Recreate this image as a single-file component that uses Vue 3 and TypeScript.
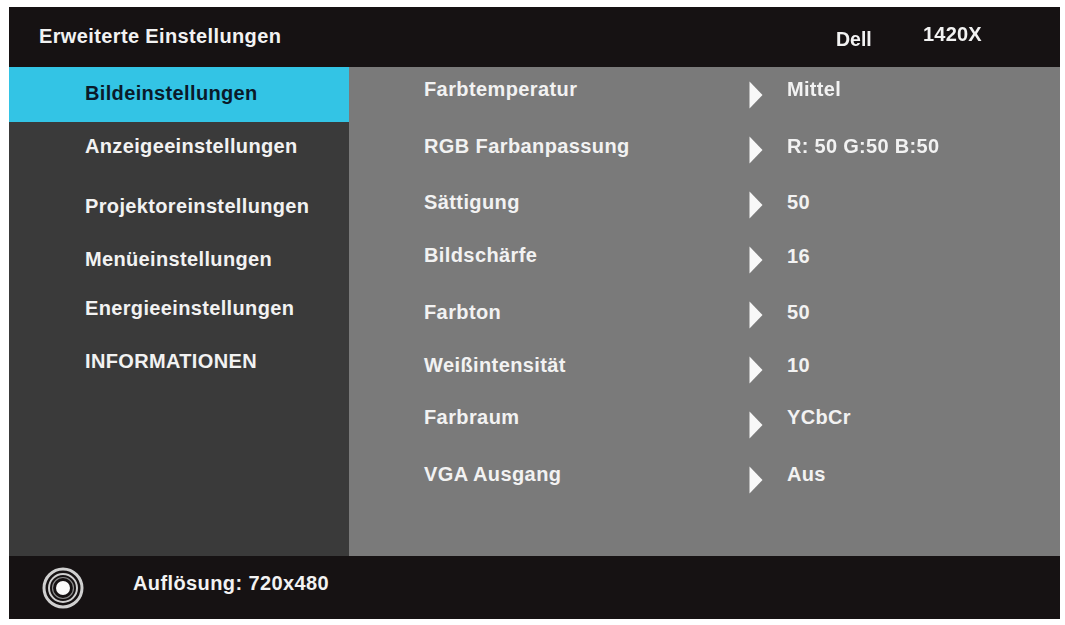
<script setup lang="ts">
interface MenuItem { label: string; shift: number }
interface SettingRow { label: string; value: string; labelShift: number; valueShift: number }

const menu: MenuItem[] = [
  { label: 'Bildeinstellungen', shift: -1 },
  { label: 'Anzeigeeinstellungen', shift: -3 },
  { label: 'Projektoreinstellungen', shift: 2 },
  { label: 'Menüeinstellungen', shift: 0 },
  { label: 'Energieeinstellungen', shift: -6 },
  { label: 'INFORMATIONEN', shift: -8 },
]

const rows: SettingRow[] = [
  { label: 'Farbtemperatur', value: 'Mittel', labelShift: -5, valueShift: -5 },
  { label: 'RGB Farbanpassung', value: 'R: 50 G:50 B:50', labelShift: -3, valueShift: -3 },
  { label: 'Sättigung', value: '50', labelShift: -2, valueShift: -2 },
  { label: 'Bildschärfe', value: '16', labelShift: -4, valueShift: -3 },
  { label: 'Farbton', value: '50', labelShift: -2, valueShift: -2 },
  { label: 'Weißintensität', value: '10', labelShift: -4, valueShift: -4 },
  { label: 'Farbraum', value: 'YCbCr', labelShift: -7, valueShift: -7 },
  { label: 'VGA Ausgang', value: 'Aus', labelShift: -5, valueShift: -5 },
]

const shifted = (n: number) => ({ transform: `translateY(${n}px)` })
</script>

<template>
  <main class="page">
    <section class="osd">
      <header class="topbar">
        <h1 class="title">Erweiterte Einstellungen</h1>
        <span class="brand">Dell</span>
        <span class="model">1420X</span>
      </header>

      <div class="body">
        <nav class="menu">
          <div
            v-for="(item, i) in menu"
            :key="item.label"
            class="menu-item"
            :class="{ active: i === 0 }"
          >
            <span :style="shifted(item.shift)">{{ item.label }}</span>
          </div>
        </nav>

        <div class="settings">
          <div v-for="row in rows" :key="row.label" class="row">
            <span class="label" :style="shifted(row.labelShift)">{{ row.label }}</span>
            <svg class="arrow" viewBox="0 0 14 28" aria-hidden="true">
              <path d="M0.5 0.5 L13.5 14 L0.5 27.5 Z" />
            </svg>
            <span class="value" :style="shifted(row.valueShift)">{{ row.value }}</span>
          </div>
        </div>
      </div>

      <footer class="bottombar">
        <svg class="lens" viewBox="0 0 42 42" aria-hidden="true">
          <circle class="ring outer" cx="21" cy="21" r="19" />
          <circle class="ring middle" cx="21" cy="21" r="14" />
          <circle class="ring inner" cx="21" cy="21" r="10.5" />
          <circle class="core" cx="21" cy="21" r="7" />
        </svg>
        <span class="resolution">Auflösung: 720x480</span>
      </footer>
    </section>
  </main>
</template>

<style scoped>
.page {
  width: 1065px;
  height: 625px;
  padding: 7px 5px 6px 9px;
  box-sizing: border-box;
  background: #ffffff;
  font-family: "Liberation Sans", Arial, sans-serif;
  font-weight: 700;
  overflow: hidden;
}
.osd {
  height: 100%;
  display: flex;
  flex-direction: column;
  filter: blur(0.5px);
  font-size: 20px;
  letter-spacing: 0.4px;
  color: #f2f2f2;
}
.topbar {
  height: 60px;
  flex: none;
  display: flex;
  align-items: center;
  padding-left: 30px;
  background: #161213;
}
.title {
  margin: -2px 0 0;
  font: inherit;
  font-size: 20px;
  letter-spacing: 0.37px;
  width: 797px;
}
.brand {
  width: 87px;
  font-size: 19.5px;
  letter-spacing: 0;
  transform: translateY(2px);
}
.model {
  font-size: 20px;
  letter-spacing: 0.2px;
  transform: translateY(-3px);
}
.body {
  flex: 1;
  display: flex;
  min-height: 0;
}
.menu {
  width: 340px;
  flex: none;
  background: #3a3a3a;
  letter-spacing: 0.35px;
}
.menu-item {
  height: 55px;
  display: flex;
  align-items: center;
  padding-left: 76px;
}
.menu-item.active {
  background: #33c4e5;
  color: #0a1a2a;
}
.settings {
  flex: 1;
  background: #7a7a7a;
}
.row {
  height: 55px;
  display: flex;
  align-items: center;
  padding-left: 75px;
}
.label {
  width: 325px;
  flex: none;
}
.arrow {
  width: 14px;
  height: 28px;
  flex: none;
  fill: #f8f8f8;
  filter: blur(0.5px);
}
.value {
  margin-left: 24px;
  letter-spacing: 0.3px;
}
.bottombar {
  height: 63px;
  flex: none;
  display: flex;
  align-items: center;
  padding-left: 33px;
  background: #161213;
}
.lens {
  width: 42px;
  height: 42px;
  flex: none;
  filter: blur(0.5px);
}
.ring {
  fill: none;
  stroke: #d0d0d0;
}
.outer {
  stroke-width: 3;
}
.middle {
  stroke-width: 2;
}
.inner {
  stroke-width: 1.2;
  stroke: #8a8a8a;
}
.core {
  fill: #fafafa;
}
.resolution {
  margin-left: 49px;
  font-size: 20px;
  letter-spacing: 0.4px;
  transform: translateY(-4px);
}
</style>
